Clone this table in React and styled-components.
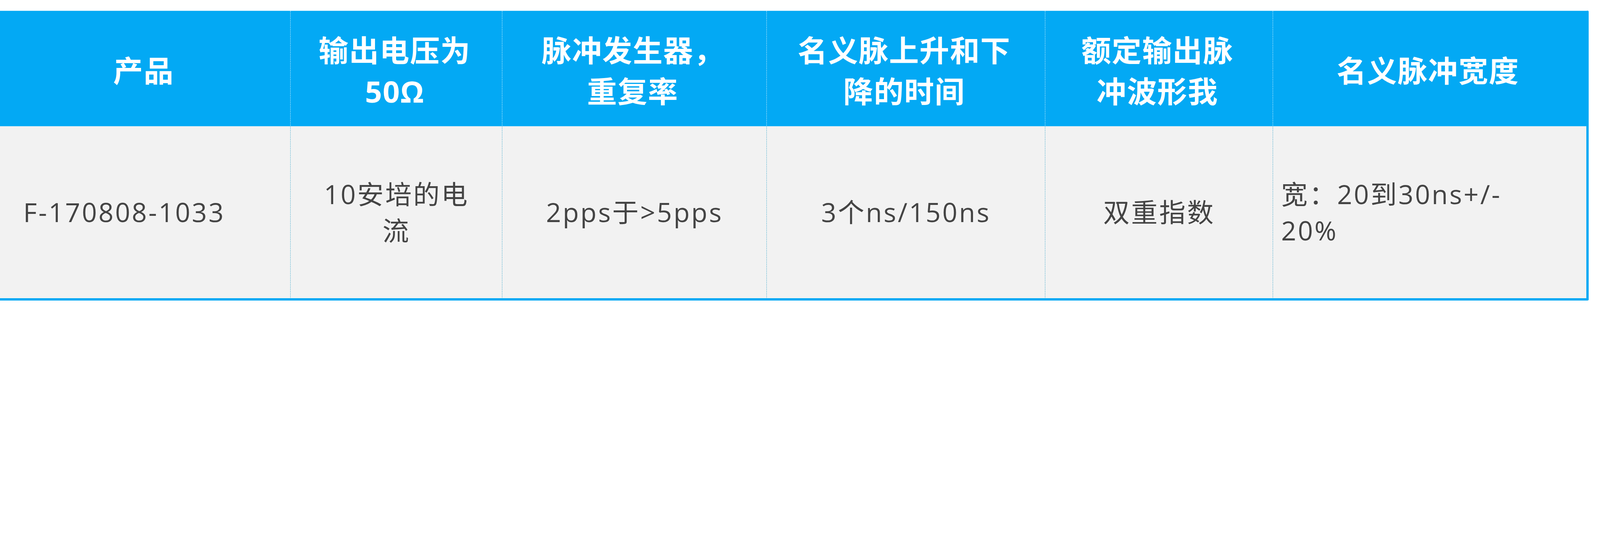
import React from 'react';
import styled, { createGlobalStyle } from 'styled-components';

/*
 * 设计稿宽 7152。所有尺寸按视口宽度等比换算，
 * 视口不是 7152 时整张表格仍完整、按比例显示。
 */
const DESIGN_WIDTH = 7152;
const dp = (n) => `calc(${n} * 100vw / ${DESIGN_WIDTH})`;

const TABLE_WIDTH = 7091;

/* 列定义：宽度与单元格内边距按截图量得 */
const COLUMNS = [
  { id: 'product', title: '产品', width: 1300, value: 'F-170808-1033', align: 'left', padLeft: 104, padRight: 120 },
  { id: 'current', title: '输出电压为50Ω', width: 945, value: '10安培的电流', align: 'center', padLeft: 120, padRight: 120 },
  { id: 'rate', title: '脉冲发生器，重复率', width: 1183, value: '2pps于>5pps', align: 'center', padLeft: 120, padRight: 120 },
  { id: 'rise', title: '名义脉上升和下降的时间', width: 1244, value: '3个ns/150ns', align: 'center', padLeft: 120, padRight: 120 },
  { id: 'wave', title: '额定输出脉冲波形我', width: 1019, value: '双重指数', align: 'center', padLeft: 120, padRight: 120 },
  {
    id: 'width',
    title: '名义脉冲宽度',
    width: 1400,
    value: (
      <>
        宽：20到30ns+/-<wbr />20%
      </>
    ),
    align: 'left',
    padLeft: 36,
    padRight: 300,
  },
];

export default function App() {
  return (
    <>
      <GlobalStyle />
      <Page>
        <Frame>
          <SpecTable>
            <colgroup>
              {COLUMNS.map((col) => (
                <col key={col.id} style={{ width: `${(col.width / TABLE_WIDTH) * 100}%` }} />
              ))}
            </colgroup>
            <thead>
              <tr>
                {COLUMNS.map((col, i) => (
                  <HeadCell key={col.id} $divider={i < COLUMNS.length - 1}>
                    {col.title}
                  </HeadCell>
                ))}
              </tr>
            </thead>
            <tbody>
              <tr>
                {COLUMNS.map((col, i) => (
                  <BodyCell
                    key={col.id}
                    $divider={i < COLUMNS.length - 1}
                    $align={col.align}
                    $padLeft={col.padLeft}
                    $padRight={col.padRight}
                  >
                    {col.value}
                  </BodyCell>
                ))}
              </tr>
            </tbody>
          </SpecTable>
        </Frame>
      </Page>
    </>
  );
}

/* ── styled-components ── */

const BLUE = '#03a9f4';

const GlobalStyle = createGlobalStyle`
  html, body {
    margin: 0;
    padding: 0;
    background: #ffffff;
  }
  body {
    font-family: "Open Sans", "Noto Sans CJK SC", sans-serif;
  }
`;

const Page = styled.div`
  padding-top: ${dp(47)};
`;

const Frame = styled.div`
  width: ${dp(TABLE_WIDTH)};
  border-top: 1px solid #b6e6fc;
  border-right: ${dp(12)} solid ${BLUE};
  border-bottom: ${dp(12)} solid ${BLUE};
  border-radius: 0 ${dp(6)} ${dp(6)} 0;
  overflow: hidden;
`;

const SpecTable = styled.table`
  width: 100%;
  table-layout: fixed;
  border-collapse: separate;
  border-spacing: 0;
`;

const HeadCell = styled.th`
  height: ${dp(495)};
  padding: ${dp(20)} ${dp(136)} 0 ${dp(120)};
  background-color: ${BLUE};
  background-image: ${({ $divider }) =>
    $divider ? 'linear-gradient(to bottom, rgba(255,255,255,0.85) 0 50%, transparent 50%)' : 'none'};
  background-size: ${dp(2)} ${dp(8)};
  background-position: right top;
  background-repeat: repeat-y;
  border-bottom: 1px solid #9bdaf8;
  color: #ffffff;
  font-family: "Open Sans", "Noto Sans CJK SC", sans-serif;
  font-size: ${dp(133)};
  font-weight: 700;
  line-height: ${dp(184)};
  letter-spacing: ${dp(3)};
  text-align: center;
  vertical-align: middle;
`;

const BodyCell = styled.td`
  height: ${dp(768)};
  padding: 0 ${({ $padRight }) => dp($padRight)} 0 ${({ $padLeft }) => dp($padLeft)};
  background-color: #f2f2f2;
  background-image: ${({ $divider }) =>
    $divider ? 'linear-gradient(to bottom, #3fa9cc 0 50%, transparent 50%)' : 'none'};
  background-size: ${dp(2)} ${dp(8)};
  background-position: right top;
  background-repeat: repeat-y;
  color: #444444;
  font-family: "Open Sans", "Noto Sans CJK SC", sans-serif;
  font-size: ${dp(118)};
  font-weight: 400;
  line-height: ${dp(162)};
  letter-spacing: ${dp(7)};
  text-align: ${({ $align }) => $align};
  vertical-align: middle;
`;
